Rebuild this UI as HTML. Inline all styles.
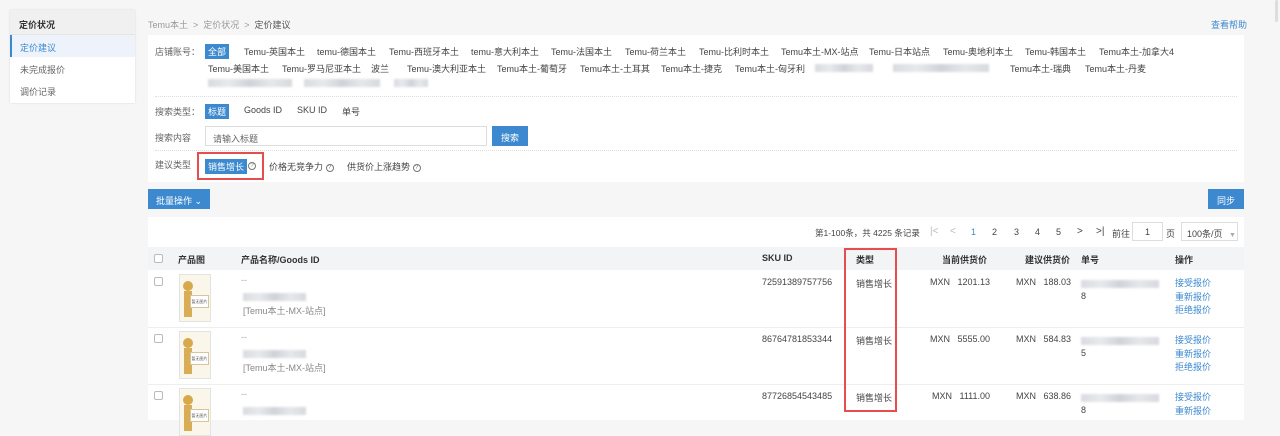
<!DOCTYPE html>
<html><head><meta charset="utf-8"><style>
*{margin:0;padding:0;box-sizing:border-box}
body{width:1280px;height:420px;overflow:hidden;background:#f6f6f6;font-family:"Liberation Sans","Noto Sans CJK SC",sans-serif;font-size:9px;color:#444;position:relative}
.a{position:absolute;white-space:nowrap}
.side{left:10px;top:10px;width:125px;height:93px;background:#fff;box-shadow:0 0 2px rgba(0,0,0,.12)}
.blur{position:absolute;height:8px;background:linear-gradient(90deg,#d8dbe0,#e8e9ec,#cfd3d9,#e6e7ea,#d6d9de);filter:blur(1px)}
.tag{background:#3d89cf;color:#fff;padding:1px 3px}
.btn{background:#3d89cf;color:#fff;text-align:center}
.q{display:inline-block;width:8px;height:8px;border:1px solid #777;border-radius:50%;font-size:6px;line-height:6px;text-align:center;color:#777;vertical-align:1px}
.cb{position:absolute;width:9px;height:9px;border:1px solid #bbb;border-radius:2px;background:#fff}
.lnk{color:#3d89cf}
.th{font-weight:bold;color:#333}
.thumb{position:absolute;width:32px;height:48px;border:1px solid #e3e3e3;background:#fbf6ea}
</style></head><body>
<div class="a side">
 <div style="height:25px;background:#f0f0f0;border-bottom:1px solid #e5e5e5;padding:8px 0 0 9px;font-weight:bold;color:#333">定价状况</div>
 <div style="height:22px;background:#eef3fb;border-left:2px solid #3d89cf;padding:6px 0 0 8px;color:#3d89cf">定价建议</div>
 <div style="height:22px;padding:6px 0 0 10px;color:#666">未完成报价</div>
 <div style="height:22px;padding:6px 0 0 10px;color:#666">调价记录</div>
</div>
<div class="a" style="left:148px;top:18px;color:#999">Temu本土 &nbsp;&gt;&nbsp; 定价状况 &nbsp;&gt;&nbsp; <span style="color:#555">定价建议</span></div>
<div class="a lnk" style="left:1211px;top:18px">查看帮助</div>
<div class="a" style="left:148px;top:35px;width:1096px;height:147px;background:#fff"></div>
<div class="a" style="left:155px;top:45px;color:#666">店铺账号：</div>
<div class="a tag" style="left:205px;top:44px">全部</div>
<div class="a" style="left:244px;top:45px">Temu-英国本土</div>
<div class="a" style="left:317px;top:45px">temu-德国本土</div>
<div class="a" style="left:389px;top:45px">Temu-西班牙本土</div>
<div class="a" style="left:471px;top:45px">temu-意大利本土</div>
<div class="a" style="left:551px;top:45px">Temu-法国本土</div>
<div class="a" style="left:625px;top:45px">Temu-荷兰本土</div>
<div class="a" style="left:699px;top:45px">Temu-比利时本土</div>
<div class="a" style="left:781px;top:45px">Temu本土-MX-站点</div>
<div class="a" style="left:869px;top:45px">Temu-日本站点</div>
<div class="a" style="left:943px;top:45px">Temu-奥地利本土</div>
<div class="a" style="left:1025px;top:45px">Temu-韩国本土</div>
<div class="a" style="left:1099px;top:45px">Temu本土-加拿大4</div>
<div class="a" style="left:208px;top:62px">Temu-美国本土</div>
<div class="a" style="left:282px;top:62px">Temu-罗马尼亚本土</div>
<div class="a" style="left:371px;top:62px">波兰</div>
<div class="a" style="left:407px;top:62px">Temu-澳大利亚本土</div>
<div class="a" style="left:497px;top:62px">Temu本土-葡萄牙</div>
<div class="a" style="left:580px;top:62px">Temu本土-土耳其</div>
<div class="a" style="left:661px;top:62px">Temu本土-捷克</div>
<div class="a" style="left:735px;top:62px">Temu本土-匈牙利</div>
<div class="blur" style="left:815px;top:64px;width:58px"></div>
<div class="blur" style="left:893px;top:64px;width:96px"></div>
<div class="a" style="left:1010px;top:62px">Temu本土-瑞典</div>
<div class="a" style="left:1085px;top:62px">Temu本土-丹麦</div>
<div class="blur" style="left:208px;top:79px;width:84px"></div>
<div class="blur" style="left:304px;top:79px;width:76px"></div>
<div class="blur" style="left:394px;top:79px;width:34px"></div>
<div class="a" style="left:155px;top:96px;width:1082px;border-top:1px dotted #ddd"></div>
<div class="a" style="left:155px;top:105px;color:#666">搜索类型：</div>
<div class="a tag" style="left:205px;top:104px">标题</div>
<div class="a" style="left:244px;top:105px">Goods ID</div>
<div class="a" style="left:297px;top:105px">SKU ID</div>
<div class="a" style="left:342px;top:105px">单号</div>
<div class="a" style="left:155px;top:131px;color:#666">搜索内容</div>
<div class="a" style="left:205px;top:126px;width:282px;height:20px;border:1px solid #ddd;padding:5px 7px;color:#666">请输入标题</div>
<div class="a btn" style="left:492px;top:126px;width:36px;height:20px;padding-top:5px">搜索</div>
<div class="a" style="left:155px;top:150px;width:1082px;border-top:1px dotted #ddd"></div>
<div class="a" style="left:155px;top:158px;color:#666">建议类型</div>
<div class="a tag" style="left:205px;top:159px">销售增长</div>
<div class="a" style="left:248px;top:160px"><span class="q">?</span></div>
<div class="a" style="left:269px;top:160px">价格无竞争力 <span class="q">?</span></div>
<div class="a" style="left:347px;top:160px">供货价上涨趋势 <span class="q">?</span></div>
<div class="a" style="left:197px;top:152px;width:67px;height:28px;border:2px solid #e84d4d"></div>
<div class="a btn" style="left:148px;top:189px;width:62px;height:20px;padding-top:5px">批量操作 ⌄</div>
<div class="a btn" style="left:1208px;top:189px;width:36px;height:20px;padding-top:5px">同步</div>
<div class="a" style="left:148px;top:217px;width:1096px;height:203px;background:#fff"></div>
<div class="a" style="left:815px;top:227px;font-size:8.5px">第1-100条，共 4225 条记录</div>
<div class="a" style="left:930px;top:226px;color:#bbb;font-size:10px">|&lt;</div>
<div class="a" style="left:950px;top:226px;color:#bbb;font-size:10px">&lt;</div>
<div class="a lnk" style="left:971px;top:227px">1</div>
<div class="a" style="left:992px;top:227px">2</div>
<div class="a" style="left:1014px;top:227px">3</div>
<div class="a" style="left:1035px;top:227px">4</div>
<div class="a" style="left:1056px;top:227px">5</div>
<div class="a" style="left:1077px;top:226px;font-size:10px">&gt;</div>
<div class="a" style="left:1096px;top:226px;font-size:10px">&gt;|</div>
<div class="a" style="left:1112px;top:227px">前往</div>
<div class="a" style="left:1132px;top:222px;width:31px;height:19px;border:1px solid #ddd;text-align:center;padding-top:4px">1</div>
<div class="a" style="left:1166px;top:227px">页</div>
<div class="a" style="left:1181px;top:222px;width:57px;height:19px;border:1px solid #ddd;padding:4px 0 0 5px">100条/页 <span style="color:#aaa;font-size:7px;margin-left:4px">▼</span></div>
<div class="a" style="left:148px;top:247px;width:1096px;height:23px;background:#f3f4f5"></div>
<div class="cb" style="left:154px;top:254px"></div>
<div class="a th" style="left:178px;top:253px">产品图</div>
<div class="a th" style="left:241px;top:253px">产品名称/Goods ID</div>
<div class="a th" style="left:762px;top:253px">SKU ID</div>
<div class="a th" style="left:856px;top:253px">类型</div>
<div class="a th" style="left:942px;top:253px">当前供货价</div>
<div class="a th" style="left:1025px;top:253px">建议供货价</div>
<div class="a th" style="left:1081px;top:253px">单号</div>
<div class="a th" style="left:1175px;top:253px">操作</div>
<div class="a" style="left:148px;top:327px;width:1096px;border-top:1px solid #eee"></div>
<div class="a" style="left:148px;top:384px;width:1096px;border-top:1px solid #eee"></div>

<div class="cb" style="left:154px;top:277px"></div>
<div class="thumb" style="left:179px;top:274px"><div style="position:absolute;left:3px;top:6px;width:10px;height:10px;border-radius:50%;background:#d7a94c"></div><div style="position:absolute;left:4px;top:16px;width:8px;height:26px;background:#d9ad55"></div><div style="position:absolute;left:10px;top:20px;width:19px;height:13px;background:#fff;border:1px solid #d8c49a;font-size:4px;padding-top:3px;text-align:center;color:#555">暂无图片</div></div>
<div class="a" style="left:241px;top:275px;color:#aaa">--</div>
<div class="blur" style="left:243px;top:293px;width:63px"></div>
<div class="a" style="left:243px;top:304px;color:#888">[Temu本土-MX-站点]</div>
<div class="a" style="left:762px;top:277px">72591389757756</div>
<div class="a" style="left:856px;top:277px">销售增长</div>
<div class="a" style="left:930px;top:277px">MXN &nbsp; 1201.13</div>
<div class="a" style="left:1016px;top:277px">MXN &nbsp; 188.03</div>
<div class="blur" style="left:1081px;top:280px;width:78px"></div>
<div class="a" style="left:1081px;top:291px">8</div>
<div class="a lnk" style="left:1175px;top:277px;line-height:13.5px">接受报价<br>重新报价<br>拒绝报价</div>

<div class="cb" style="left:154px;top:334px"></div>
<div class="thumb" style="left:179px;top:331px"><div style="position:absolute;left:3px;top:6px;width:10px;height:10px;border-radius:50%;background:#d7a94c"></div><div style="position:absolute;left:4px;top:16px;width:8px;height:26px;background:#d9ad55"></div><div style="position:absolute;left:10px;top:20px;width:19px;height:13px;background:#fff;border:1px solid #d8c49a;font-size:4px;padding-top:3px;text-align:center;color:#555">暂无图片</div></div>
<div class="a" style="left:241px;top:332px;color:#aaa">--</div>
<div class="blur" style="left:243px;top:350px;width:63px"></div>
<div class="a" style="left:243px;top:361px;color:#888">[Temu本土-MX-站点]</div>
<div class="a" style="left:762px;top:334px">86764781853344</div>
<div class="a" style="left:856px;top:334px">销售增长</div>
<div class="a" style="left:930px;top:334px">MXN &nbsp; 5555.00</div>
<div class="a" style="left:1016px;top:334px">MXN &nbsp; 584.83</div>
<div class="blur" style="left:1081px;top:337px;width:78px"></div>
<div class="a" style="left:1081px;top:348px">5</div>
<div class="a lnk" style="left:1175px;top:334px;line-height:13.5px">接受报价<br>重新报价<br>拒绝报价</div>

<div class="cb" style="left:154px;top:391px"></div>
<div class="thumb" style="left:179px;top:388px"><div style="position:absolute;left:3px;top:6px;width:10px;height:10px;border-radius:50%;background:#d7a94c"></div><div style="position:absolute;left:4px;top:16px;width:8px;height:26px;background:#d9ad55"></div><div style="position:absolute;left:10px;top:20px;width:19px;height:13px;background:#fff;border:1px solid #d8c49a;font-size:4px;padding-top:3px;text-align:center;color:#555">暂无图片</div></div>
<div class="a" style="left:241px;top:389px;color:#aaa">--</div>
<div class="blur" style="left:243px;top:407px;width:63px"></div>
<div class="a" style="left:762px;top:391px">87726854543485</div>
<div class="a" style="left:856px;top:391px">销售增长</div>
<div class="a" style="left:932px;top:391px">MXN &nbsp; 1111.00</div>
<div class="a" style="left:1016px;top:391px">MXN &nbsp; 638.86</div>
<div class="blur" style="left:1081px;top:394px;width:78px"></div>
<div class="a" style="left:1081px;top:405px">8</div>
<div class="a lnk" style="left:1175px;top:391px;line-height:13.5px">接受报价<br>重新报价</div>

<div class="a" style="left:844px;top:248px;width:53px;height:164px;border:2px solid #e84d4d"></div>
<div class="a" style="left:1275px;top:0;width:3px;height:22px;background:#ddd;border-radius:2px"></div>
</body></html>
